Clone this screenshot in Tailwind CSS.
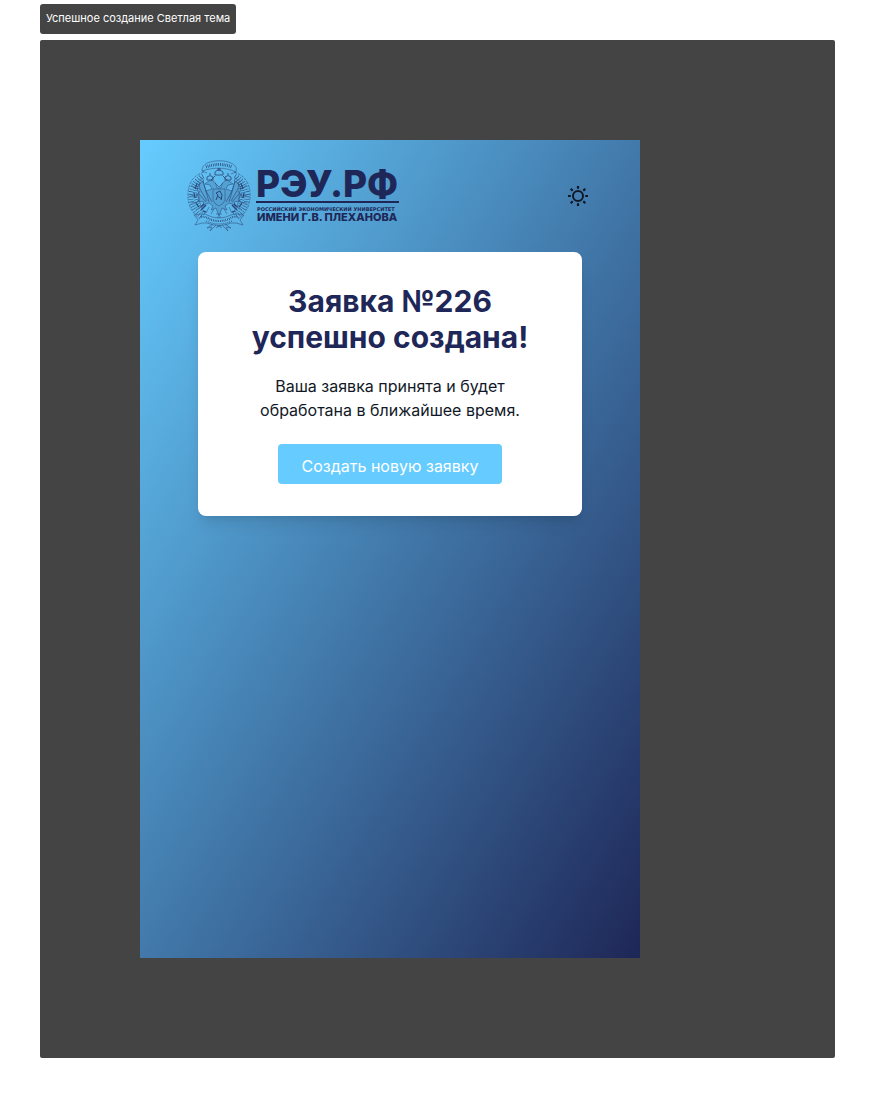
<!DOCTYPE html>
<html lang="ru">
<head>
<meta charset="utf-8">
<meta name="viewport" content="width=device-width, initial-scale=1">
<title>Успешное создание Светлая тема</title>
<script src="https://cdn.jsdelivr.net/npm/@tailwindcss/browser@4"></script>
</head>
<body class="bg-white font-['Inter',sans-serif] px-10 pt-1 pb-10">
<div class="flex flex-col items-start gap-1.5">
  <div class="rounded-[3px] bg-[#444] px-1.5 pt-[5px] pb-[7px] text-[11px] leading-[18px] text-white">Успешное создание Светлая тема</div>
  <section class="w-full rounded-xs bg-[#444] p-[100px]">
    <div class="w-full max-w-[500px] min-h-[818px] bg-linear-to-br/srgb from-[#66ccff] to-[#1e2757]">
      <header class="flex h-28 items-center justify-between pl-[47px] pr-[50px]">
        <a href="#" aria-label="РЭУ.РФ" class="flex items-center gap-[5px] text-[#1e2757]">
          <svg class="h-[72px] w-16" viewBox="0 0 64 72" fill="none" stroke="currentColor" stroke-width=".5" stroke-linejoin="round" aria-hidden="true">
            <g opacity=".8">
              <path d="M15 11C15 7 17 5 20 3C28 0 37 0 44 3C48 5 50 7 49 12C38 7 27 7 15 11ZM15 11L20 13M49 12L44 14"/>
              <path stroke-width="3" stroke-dasharray=".7 1.1" d="M19 7Q32 2 45 7"/>
              <path stroke-dasharray="3 1" d="M17 12C7 15 2 22 1 32C0 45 5 53 13 59M47 12C57 15 62 22 63 32C64 45 59 53 51 59"/>
              <path stroke-width="5" stroke-dasharray=".5 2" d="M16 16C7 21 4 29 4 36C4 45 8 53 16 57M48 16C57 21 60 29 60 36C60 45 56 53 48 57"/>
              <path stroke-width="4" stroke-dasharray=".5 1.8" d="M16 19C9 24 7 32 9 40Q11 49 18 53M48 19C55 24 57 32 55 40Q53 49 46 53"/>
              <path stroke-width="1.2" d="M10 24l-2 5M7 33l1 5M9 43l3 4M16 51l3 1M54 24l2 5M57 33l-1 5M55 43l-3 4M48 51l-3 1"/>
              <path d="M4 25l6 4 3-6M2 34l7 3 4-6M4 43l7-1 1-7M9 50l5-4-2-6M60 25l-6 4-3-6M62 34l-7 3-4-6M60 43l-7-1-1-7M55 50l-5-4 2-6"/>
              <path stroke-width=".8" d="M28 15v-3q4-4 8 0v3zM32 11V8M30 9h4M20 20v-3q3-3 6 0v3zM38 20v-3q3-3 6 0v3zM23 15v-2M41 15v-2M28 16L24 20M36 16l4 4"/>
              <path fill="currentColor" fill-opacity=".2" d="M30 28C29 22 26 19 22 21L18 24L23 25L25 29L19 31L16 21L12 24L13 29L10 28L12 34L9 34L13 39L11 41L17 42L16 45L22 43L26 46L24 50L29 48L32 56L35 48L40 50L38 46L42 43L48 45L47 42L53 41L51 39L55 34L52 34L54 28L51 29L52 24L48 21L45 31L39 29L41 25L46 24L42 21C38 19 35 22 34 28Z"/>
              <path stroke-width=".6" d="M16 21l6 21M13 29l7 12M12 34l7 8M19 31l6 11M48 21l-6 21M51 29l-7 12M52 34l-7 8M45 31l-6 11M28 23l4 4 4-4"/>
              <path d="M26 29h12v11q-1 4-6 6-5-2-6-6z"/>
              <path stroke-width="1" d="M29 40l2-5-2-2 4-2 2 4-1 5M30 36l5 3"/>
              <path stroke-width="1.5" d="M19 45l-5 5M17 44l-3 3M45 45l5 5M47 44l3 3"/>
              <path d="M22 47l-3 6M42 47l3 6M27 49l-3 5M37 49l3 5M29 54h6M30 57h4"/>
              <path d="M7 55Q17 53 20 55Q32 61 44 55Q48 53 57 55L53 60L56 65Q48 62 44 63Q32 68 20 63Q16 62 8 65L11 60Z"/>
              <path stroke-width="2" stroke-dasharray=".7 1.1" d="M14 57Q18 56 22 59Q32 63 42 59Q46 56 50 57"/>
              <path stroke-width="1.2" stroke-dasharray=".7 1.3" d="M19 61Q32 67 45 61"/>
              <path d="M29 65L23 71L25 67L20 68L26 64M35 65L41 71L39 67L44 68L38 64M29 68l3-2 3 2M30 66h4"/>
            </g>
          </svg>
          <svg class="h-[72px] w-[143px]" viewBox="0 0 143 72" fill="currentColor" font-family="Inter, sans-serif" role="img" aria-label="РЭУ.РФ — Российский экономический университет имени Г.В. Плеханова">
            <text x="0" y="37" font-size="37" font-weight="800">РЭУ.РФ</text>
            <rect y="41" width="143" height="2"/>
            <text x="1" y="51" font-family="DejaVu Sans, sans-serif" font-size="5" font-weight="700">РОССИЙСКИЙ ЭКОНОМИЧЕСКИЙ УНИВЕРСИТЕТ</text>
            <text x="1" y="61" font-size="11" font-weight="800">ИМЕНИ Г.В. ПЛЕХАНОВА</text>
          </svg>
        </a>
        <button type="button" aria-label="Сменить тему" class="flex size-6 items-center justify-center text-[#111827]">
          <svg class="size-6" viewBox="0 0 24 24" fill="none" stroke="currentColor" stroke-width="2" aria-hidden="true">
            <circle cx="12" cy="12" r="5"/>
            <path stroke-width="2.200" d="M12 2v2.800M12 19.200v2.800M2 12h2.800M19.200 12H22M4.700 4.700l2 2M17.300 17.300l2 2M4.700 19.300l2-2M17.300 6.700l2-2"/>
          </svg>
        </button>
      </header>
      <main class="mx-auto w-full max-w-sm rounded-lg bg-white px-8 pt-[31px] pb-8 text-center shadow-lg">
        <h1 class="text-[30px] leading-9 font-bold text-[#1e2757]">Заявка №226<br>успешно создана!</h1>
        <p class="mt-[19px] text-base leading-6 text-[#111827]">Ваша заявка принята и будет<br>обработана в ближайшее время.</p>
        <button type="button" class="mt-[22px] h-10 rounded-sm bg-[#66ccff] px-6 pt-1 text-base text-white">Создать новую заявку</button>
      </main>
    </div>
  </section>
</div>
</body>
</html>
